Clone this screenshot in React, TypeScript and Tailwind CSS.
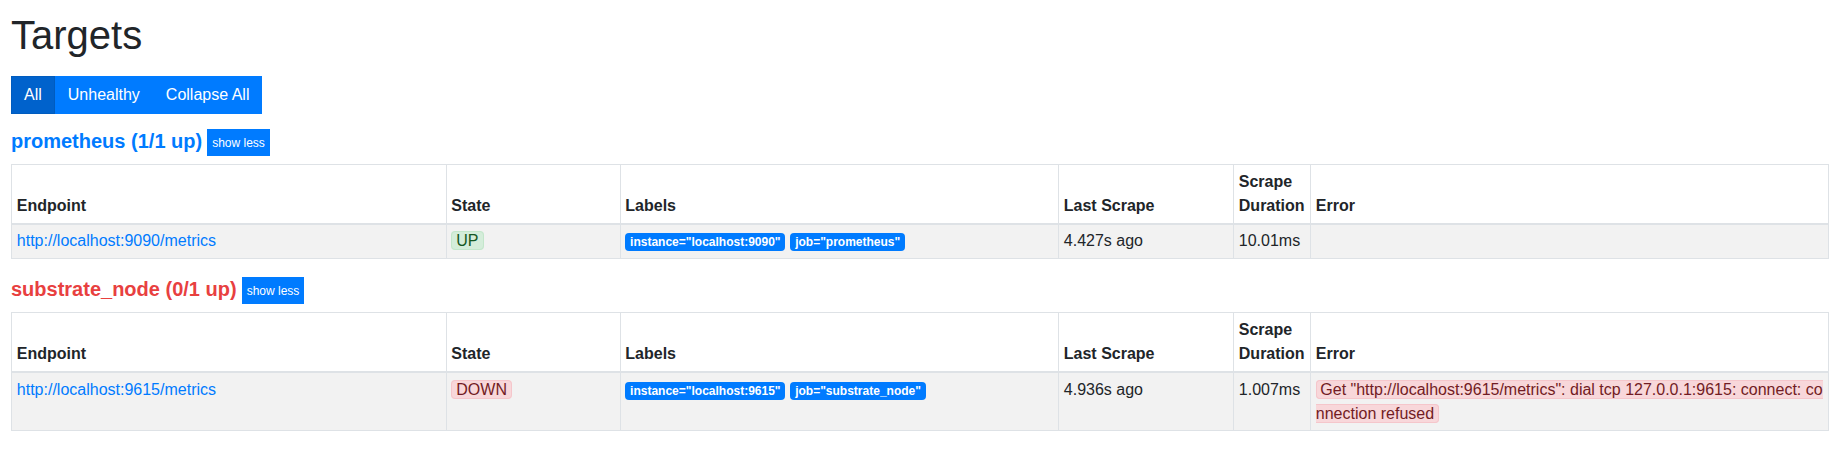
import React from 'react'

type Target = {
  endpoint: string
  up: boolean
  labels: [string, string][]
  lastScrape: string
  duration: string
  error?: string
}

type Pool = {
  name: string
  upCount: number
  targets: Target[]
}

const pools: Pool[] = [
  {
    name: 'prometheus',
    upCount: 1,
    targets: [
      {
        endpoint: 'http://localhost:9090/metrics',
        up: true,
        labels: [
          ['instance', 'localhost:9090'],
          ['job', 'prometheus'],
        ],
        lastScrape: '4.427s ago',
        duration: '10.01ms',
      },
    ],
  },
  {
    name: 'substrate_node',
    upCount: 0,
    targets: [
      {
        endpoint: 'http://localhost:9615/metrics',
        up: false,
        labels: [
          ['instance', 'localhost:9615'],
          ['job', 'substrate_node'],
        ],
        lastScrape: '4.936s ago',
        duration: '1.007ms',
        error:
          'Get "http://localhost:9615/metrics": dial tcp 127.0.0.1:9615: connect: connection refused',
      },
    ],
  },
]

const th = 'border border-[#dee2e6] border-b-2 p-[4.8px] text-left align-bottom font-bold'
const td = 'border border-[#dee2e6] p-[4.8px] align-top'

function PoolPanel({ pool }: { pool: Pool }) {
  const healthy = pool.upCount === pool.targets.length
  return (
    <div>
      <div className="mb-2 flex h-[27px] items-start">
        <span
          className={
            healthy
              ? 'text-[20px] font-bold leading-6 text-[#007bff]'
              : 'text-[20px] font-bold leading-6 text-[#e8403f]'
          }
        >
          {pool.name} ({pool.upCount}/{pool.targets.length} up)
        </span>
        <button
          type="button"
          className="ml-[5px] h-[27px] bg-[#007bff] px-[5px] text-[12px] leading-[18px] text-white"
        >
          show less
        </button>
      </div>
      <table className="mb-[18px] w-full table-fixed border-collapse">
        <colgroup>
          <col className="w-[434.5px]" />
          <col className="w-[174px]" />
          <col className="w-[438.5px]" />
          <col className="w-[175px]" />
          <col className="w-[77px]" />
          <col />
        </colgroup>
        <thead>
          <tr>
            <th className={th}>Endpoint</th>
            <th className={th}>State</th>
            <th className={th}>Labels</th>
            <th className={th}>Last Scrape</th>
            <th className={th}>Scrape Duration</th>
            <th className={th}>Error</th>
          </tr>
        </thead>
        <tbody>
          {pool.targets.map((t) => (
            <tr key={t.endpoint} className="bg-[#f2f2f2]">
              <td className={td}>
                <a className="text-[#007bff]" href="#">
                  {t.endpoint}
                </a>
              </td>
              <td className={td}>
                {t.up ? (
                  <span className="rounded border border-[#c3e6cb] bg-[#d4edda] px-1 text-[#155724]">
                    UP
                  </span>
                ) : (
                  <span className="rounded border border-[#f5c6cb] bg-[#f8d7da] px-1 text-[#721c24]">
                    DOWN
                  </span>
                )}
              </td>
              <td className={td}>
                {t.labels.map(([k, v]) => (
                  <span
                    key={k}
                    className="mr-[5px] inline-block rounded bg-[#007bff] px-[4.8px] py-[3px] text-[12px] font-bold leading-none text-white"
                  >
                    {k}="{v}"
                  </span>
                ))}
              </td>
              <td className={td}>{t.lastScrape}</td>
              <td className={td}>{t.duration}</td>
              <td className={td}>
                {t.error && (
                  <span className="break-all rounded border border-[#f5c6cb] bg-[#f8d7da] pl-[3.5px] pr-1 text-[#721c24]">
                    {t.error}
                  </span>
                )}
              </td>
            </tr>
          ))}
        </tbody>
      </table>
    </div>
  )
}

export default function App() {
  return (
    <div className="min-h-screen bg-white pl-[11px] pr-[15px] pt-[11px] font-['Liberation_Sans',Arial,sans-serif] text-[16px] leading-6 text-[#212529]">
      <h1 className="mb-[17px] text-[40px] font-medium leading-[48px]">Targets</h1>
      <div className="mb-[15px] flex">
        <button
          type="button"
          className="h-[38px] border border-[#005cbf] bg-[#0062cc] px-3 text-white"
        >
          All
        </button>
        <button
          type="button"
          className="h-[38px] border border-[#007bff] bg-[#007bff] px-3 text-white"
        >
          Unhealthy
        </button>
        <button
          type="button"
          className="h-[38px] border border-[#007bff] bg-[#007bff] px-3 text-white"
        >
          Collapse All
        </button>
      </div>
      {pools.map((p) => (
        <PoolPanel key={p.name} pool={p} />
      ))}
    </div>
  )
}
